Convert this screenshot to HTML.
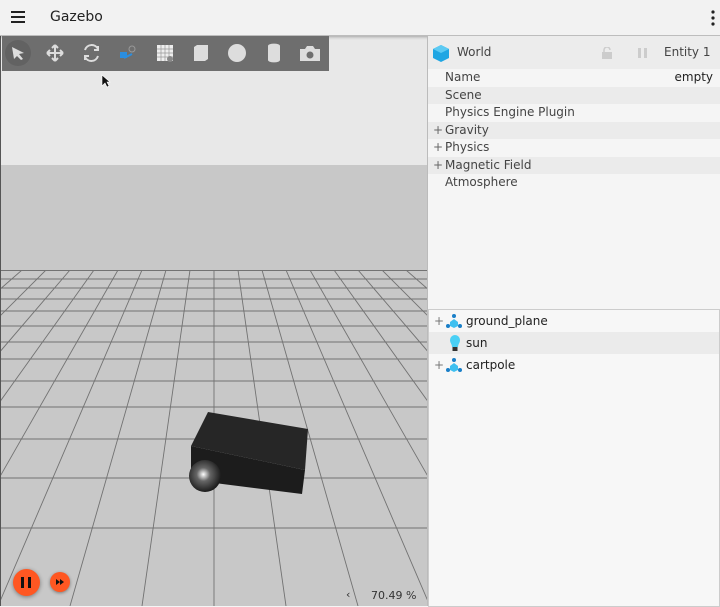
<!DOCTYPE html>
<html><head><style>
body{margin:0;width:720px;height:606px;overflow:hidden;font-family:"DejaVu Sans","Liberation Sans",sans-serif;background:#f5f5f5;position:relative}
.top{position:absolute;left:0;top:0;width:720px;height:35px;background:#f2f2f2;border-bottom:1px solid #bdbdbd;box-shadow:0 1px 3px rgba(0,0,0,.3)}
.title{position:absolute;left:50px;top:9px;font-size:14px;color:#222}
.scene{position:absolute;left:0;top:36px;width:426px;height:570px;border-left:1px solid #555;box-sizing:border-box}
.tb{position:absolute;left:2px;top:36px;width:327px;height:35px;background:#6e6e6e}
.side{position:absolute;left:427px;top:36px;width:293px;height:570px;background:#f5f5f5;border-left:1px solid #bbb}
.row{height:17.5px;font-size:12px;color:#444;line-height:17.5px;padding-left:17px;position:relative}
.row.a{background:#ebebeb}
.pl{position:absolute;left:5px;color:#666}
.list{position:absolute;left:428px;top:309px;width:290px;height:296px;border:1px solid #ccc;background:#f7f7f7}
.li{height:22px;line-height:22px;font-size:12px;color:#222;position:relative;padding-left:37px}
</style></head><body>
<div class="scene">
<svg width="426" height="570" viewBox="0 36 426 570" style="display:block">
<rect x="0" y="36" width="426" height="129" fill="#e8e8e8"/>
<rect x="0" y="165" width="426" height="441" fill="#c8c8c8"/>
<defs><clipPath id="c"><rect x="0" y="270" width="426" height="336"/></clipPath></defs>
<g stroke="#727272" stroke-width="0.9" clip-path="url(#c)">
<line x1="0" y1="270.5" x2="426" y2="270.5"/><line x1="0" y1="279" x2="426" y2="279"/><line x1="0" y1="288" x2="426" y2="288"/><line x1="0" y1="299" x2="426" y2="299"/><line x1="0" y1="311" x2="426" y2="311"/><line x1="0" y1="326" x2="426" y2="326"/><line x1="0" y1="342" x2="426" y2="342"/><line x1="0" y1="359" x2="426" y2="359"/><line x1="0" y1="381" x2="426" y2="381"/><line x1="0" y1="407" x2="426" y2="407"/><line x1="0" y1="439" x2="426" y2="439"/><line x1="0" y1="478" x2="426" y2="478"/><line x1="0" y1="528" x2="426" y2="528"/>
<line x1="213" y1="270" x2="213" y2="606"/>
<line x1="237" y1="270" x2="285" y2="606"/><line x1="189" y1="270" x2="141" y2="606"/>
<line x1="261" y1="270" x2="357" y2="606"/><line x1="165" y1="270" x2="69" y2="606"/>
<line x1="285" y1="270" x2="429" y2="606"/><line x1="141" y1="270" x2="-3" y2="606"/>
<line x1="309" y1="270" x2="501" y2="606"/><line x1="117" y1="270" x2="-75" y2="606"/>
<line x1="333" y1="270" x2="573" y2="606"/><line x1="93" y1="270" x2="-147" y2="606"/>
<line x1="357" y1="270" x2="645" y2="606"/><line x1="69" y1="270" x2="-219" y2="606"/>
<line x1="381" y1="270" x2="717" y2="606"/><line x1="45" y1="270" x2="-291" y2="606"/>
<line x1="405" y1="270" x2="789" y2="606"/><line x1="21" y1="270" x2="-363" y2="606"/>
<line x1="429" y1="270" x2="861" y2="606"/><line x1="-3" y1="270" x2="-435" y2="606"/>
</g>
<polygon points="190,446 304,470 301,494 190,480" fill="#1c1c1c"/>
<polygon points="207,412 307,429 304,470 190,446" fill="#262626"/>
<defs><radialGradient id="s" cx="0.45" cy="0.45" r="0.6"><stop offset="0" stop-color="#fff"/><stop offset="0.35" stop-color="#666"/><stop offset="1" stop-color="#111"/></radialGradient></defs>
<circle cx="204" cy="476" r="16" fill="url(#s)"/>
</svg>
</div>
<div class="top">
<svg style="position:absolute;left:11px;top:11px" width="14" height="12"><rect y="0" width="14" height="2" fill="#222"/><rect y="5" width="14" height="2" fill="#222"/><rect y="10" width="14" height="2" fill="#222"/></svg>
<div class="title">Gazebo</div>
<svg style="position:absolute;left:711px;top:10px" width="4" height="16"><circle cx="2" cy="2" r="1.6" fill="#222"/><circle cx="2" cy="8" r="1.6" fill="#222"/><circle cx="2" cy="14" r="1.6" fill="#222"/></svg>
</div>
<div class="tb">
<svg width="327" height="35">
<circle cx="16" cy="17" r="13" fill="#626262"/>
<path d="M10 11 L22 17 L17 18 L21 23 L19 24 L15 20 L12 23 Z" fill="#ddd"/>
<path d="M53 9 v16 M45 17 h16 M53 9 l-3 3 M53 9 l3 3 M53 25 l-3 -3 M53 25 l3 -3 M45 17 l3 -3 M45 17 l3 3 M61 17 l-3 -3 M61 17 l-3 3" stroke="#ddd" stroke-width="2" fill="none"/>
<path d="M83 14 A7 7 0 0 1 96 13 M96 20 A7 7 0 0 1 83 21" stroke="#ddd" stroke-width="2" fill="none"/>
<path d="M96 10 v4 h-4 M83 24 v-4 h4" stroke="#ddd" stroke-width="2" fill="none"/>
<rect x="118" y="16" width="7" height="6" fill="#2a8ee0"/><path d="M122 22 l8 -4" stroke="#2a8ee0" stroke-width="2"/><circle cx="130" cy="13" r="3" fill="none" stroke="#999"/>
<rect x="155" y="9" width="16" height="16" fill="#eee"/><path d="M159 9v16M163 9v16M167 9v16M155 13h16M155 17h16M155 21h16" stroke="#999" stroke-width="0.7"/><circle cx="168" cy="23" r="3" fill="#888"/>
<path d="M192 11 l3 -2 h11 v14 l-3 2 h-11 z" fill="#ddd"/>
<circle cx="235" cy="17" r="9" fill="#ddd"/>
<path d="M266 10 v14 a5 2 0 0 0 12 0 v-14 a5 2 0 0 0 -12 0" fill="#ddd"/>
<path d="M298 13 h5 l2 -3 h6 l2 3 h5 v12 h-20 z" fill="#ddd"/><circle cx="308" cy="19" r="3.5" fill="#6e6e6e"/>
</svg>
</div>
<svg style="position:absolute;left:101px;top:74px" width="10" height="14"><path d="M1 1 L1 12 L4 9 L6 13 L8 12 L6 8 L9 8 Z" fill="#111" stroke="#fff" stroke-width="0.6"/></svg>
<div class="side">
<div style="height:33px;background:#ececec;position:relative;font-size:12px;color:#444">
<svg style="position:absolute;left:4px;top:8px" width="18" height="19"><polygon points="9,1 17,5 17,14 9,18 1,14 1,5" fill="#1fa6e3"/><polygon points="9,1 17,5 9,9 1,5" fill="#5ccaf3"/></svg>
<span style="position:absolute;left:29px;top:9px">World</span>
<svg style="position:absolute;left:174px;top:11px" width="10" height="12"><rect x="0" y="5" width="10" height="7" fill="#ccc"/><path d="M2 5 V3 a3 3 0 0 1 6 0" stroke="#ccc" stroke-width="1.5" fill="none"/></svg>
<svg style="position:absolute;left:210px;top:12px" width="10" height="10"><rect x="0" width="3" height="10" fill="#ccc"/><rect x="6" width="3" height="10" fill="#ccc"/></svg>
<span style="position:absolute;left:236px;top:9px">Entity 1</span>
</div>
<div class="row">Name<span style="position:absolute;right:8px;color:#222">empty</span></div>
<div class="row a">Scene</div>
<div class="row">Physics Engine Plugin</div>
<div class="row a"><span class="pl">+</span>Gravity</div>
<div class="row"><span class="pl">+</span>Physics</div>
<div class="row a"><span class="pl">+</span>Magnetic Field</div>
<div class="row">Atmosphere</div>
</div>
<div class="list">
<div class="li"><span style="position:absolute;left:5px;color:#777">+</span>
<svg style="position:absolute;left:17px;top:3px" width="16" height="16"><circle cx="8" cy="3" r="2" fill="#1a7fc8"/><circle cx="2" cy="13" r="2" fill="#1a7fc8"/><circle cx="14" cy="13" r="2" fill="#1a7fc8"/><polygon points="8,6 12,9 12,13 8,15 4,13 4,9" fill="#3fc0f0"/></svg>ground_plane</div>
<div class="li" style="background:#ebebeb"><svg style="position:absolute;left:20px;top:2px" width="12" height="19"><path d="M6 1 a5 5 0 0 1 5 5 c0 3 -2 4 -2 7 h-6 c0 -3 -2 -4 -2 -7 a5 5 0 0 1 5 -5z" fill="#4ad0f5"/><rect x="3.5" y="13" width="5" height="4" fill="#333"/></svg>sun</div>
<div class="li"><span style="position:absolute;left:5px;color:#777">+</span>
<svg style="position:absolute;left:17px;top:3px" width="16" height="16"><circle cx="8" cy="3" r="2" fill="#1a7fc8"/><circle cx="2" cy="13" r="2" fill="#1a7fc8"/><circle cx="14" cy="13" r="2" fill="#1a7fc8"/><polygon points="8,6 12,9 12,13 8,15 4,13 4,9" fill="#3fc0f0"/></svg>cartpole</div>
</div>
<div style="position:absolute;left:13px;top:569px;width:27px;height:27px;border-radius:50%;background:#ff5722;box-shadow:0 1px 4px rgba(0,0,0,.4)"><div style="position:absolute;left:8px;top:8px;width:3px;height:11px;background:#111"></div><div style="position:absolute;left:15px;top:8px;width:3px;height:11px;background:#111"></div></div>
<div style="position:absolute;left:50px;top:572px;width:20px;height:20px;border-radius:50%;background:#ff5722;box-shadow:0 1px 3px rgba(0,0,0,.4)"><svg width="20" height="20"><path d="M6 7 l4 3 -4 3z M10 7 l4 3 -4 3z" fill="#111"/></svg></div>
<div style="position:absolute;left:346px;top:588px;font-size:11px;color:#333">‹</div>
<div style="position:absolute;left:371px;top:589px;font-size:11px;color:#333">70.49 %</div>
</body></html>
